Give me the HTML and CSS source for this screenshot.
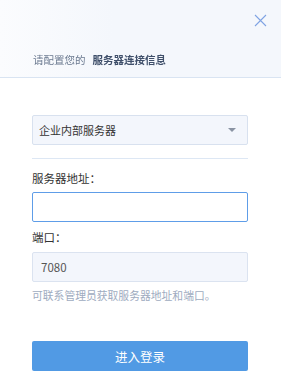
FILE: index.html
```html
<!DOCTYPE html>
<html lang="zh">
<head>
<meta charset="utf-8">
<link rel="stylesheet" href="styles.css">
</head>
<body>
<div class="page">
  <div class="header">
    <div class="close-row">
      <svg class="close" width="13" height="13" viewBox="0 0 13 13"><path d="M1 1L12 12M12 1L1 12" stroke="#7fa3e3" stroke-width="1.1" fill="none"/></svg>
    </div>
    <div class="title"><span class="t1">请配置您的</span><span class="t2">服务器连接信息</span></div>
  </div>
  <div class="form">
    <div class="select">
      <span>企业内部服务器</span>
      <span class="arrow"></span>
    </div>
    <div class="divider"></div>
    <div class="label">服务器地址：</div>
    <div class="input active"></div>
    <div class="label label2">端口：</div>
    <div class="input filled">7080</div>
    <div class="hint">可联系管理员获取服务器地址和端口。</div>
    <button class="btn">进入登录</button>
  </div>
</div>
</body>
</html>
```

FILE: styles.css
```css
* { box-sizing: border-box; }
html, body { margin: 0; padding: 0; background: #fff; }
body { font-family: "Noto Sans CJK SC", "Noto Sans", sans-serif; width: 281px; height: 378px; overflow: hidden; }
.page { width: 281px; height: 378px; background: #fff; }
.header {
  height: 78px;
  background: linear-gradient(90deg, #fbfcfe 0%, #f4f7fc 40%, #f4f7fc 100%);
  border-bottom: 1px solid #d9e4f2;
  display: flex;
  flex-direction: column;
}
.close-row { display: flex; justify-content: flex-end; padding: 14px 14px 0 0; height: 27px; }
.close { display: block; }
.title {
  margin-top: 26px;
  padding-left: 33px;
  font-size: 10.5px;
  line-height: 14px;
  color: #6b7a90;
  filter: blur(0.6px);
  white-space: nowrap;
  display: flex;
  gap: 7px;
}
.title .t2 { color: #3f4f6a; font-weight: 700; }
.form { padding: 37px 33px 0 32px; }
.select {
  height: 30px;
  background: #f3f6fc;
  border: 1px solid #d8e1ef;
  border-radius: 2px;
  display: flex;
  align-items: center;
  justify-content: space-between;
  padding: 0 11px 0 6px;
  font-size: 11px;
  color: #333;
}
.arrow {
  width: 0; height: 0;
  border-left: 4px solid transparent;
  border-right: 4px solid transparent;
  border-top: 4px solid #8a93a3;
}
.divider { height: 1px; background: #dde7f4; margin-top: 13px; }
.label { font-size: 11.5px; line-height: 16px; color: #333; margin-top: 11px; }
.label2 { margin-top: 7px; }
.input {
  margin-top: 6px;
  height: 30px;
  border-radius: 2px;
  font-size: 11.5px;
  display: flex;
  align-items: center;
  padding-left: 8px;
  color: #555;
}
.input.active { border: 1px solid #5e9de8; background: #fff; }
.input.filled { border: 1px solid #dbe3f0; background: #f3f6fc; margin-top: 7px; }
.hint { margin-top: 6px; font-size: 10.8px; line-height: 14px; color: #9eabc0; white-space: nowrap; }
.btn {
  display: block;
  width: 100%;
  margin-top: 39px;
  height: 30px;
  border: none;
  border-radius: 2px;
  background: #519ae4;
  color: #fff;
  font-family: inherit;
  font-size: 12.5px;
  padding: 0;
}
```
